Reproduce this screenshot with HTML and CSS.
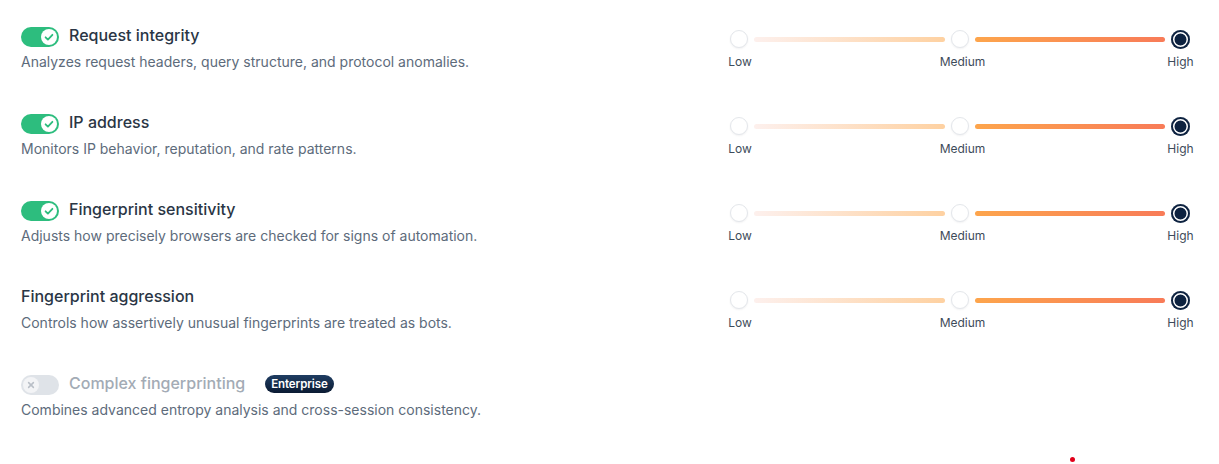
FILE: index.html
```html
<!DOCTYPE html>
<html>
<head>
<meta charset="utf-8">
<link rel="stylesheet" href="styles.css">
</head>
<body>
<div class="list">
  <div class="row">
    <div class="info">
      <div class="head">
        <span class="toggle on"><span class="knob"><svg viewBox="0 0 16 16" width="16" height="16"><path d="M4.6 8.3l2.3 2.3 4.5-4.8" fill="none" stroke="#2dbd7e" stroke-width="1.8" stroke-linecap="round" stroke-linejoin="round"/></svg></span></span>
        <span class="title">Request integrity</span>
      </div>
      <div class="desc">Analyzes request headers, query structure, and protocol anomalies.</div>
    </div>
    <div class="slider">
      <span class="stop"></span><span class="track t1"></span><span class="stop"></span><span class="track t2"></span><span class="stop active"></span>
      <span class="lab l1">Low</span><span class="lab l2">Medium</span><span class="lab l3">High</span>
    </div>
  </div>
  <div class="row">
    <div class="info">
      <div class="head">
        <span class="toggle on"><span class="knob"><svg viewBox="0 0 16 16" width="16" height="16"><path d="M4.6 8.3l2.3 2.3 4.5-4.8" fill="none" stroke="#2dbd7e" stroke-width="1.8" stroke-linecap="round" stroke-linejoin="round"/></svg></span></span>
        <span class="title">IP address</span>
      </div>
      <div class="desc">Monitors IP behavior, reputation, and rate patterns.</div>
    </div>
    <div class="slider">
      <span class="stop"></span><span class="track t1"></span><span class="stop"></span><span class="track t2"></span><span class="stop active"></span>
      <span class="lab l1">Low</span><span class="lab l2">Medium</span><span class="lab l3">High</span>
    </div>
  </div>
  <div class="row">
    <div class="info">
      <div class="head">
        <span class="toggle on"><span class="knob"><svg viewBox="0 0 16 16" width="16" height="16"><path d="M4.6 8.3l2.3 2.3 4.5-4.8" fill="none" stroke="#2dbd7e" stroke-width="1.8" stroke-linecap="round" stroke-linejoin="round"/></svg></span></span>
        <span class="title">Fingerprint sensitivity</span>
      </div>
      <div class="desc">Adjusts how precisely browsers are checked for signs of automation.</div>
    </div>
    <div class="slider">
      <span class="stop"></span><span class="track t1"></span><span class="stop"></span><span class="track t2"></span><span class="stop active"></span>
      <span class="lab l1">Low</span><span class="lab l2">Medium</span><span class="lab l3">High</span>
    </div>
  </div>
  <div class="row">
    <div class="info">
      <div class="head">
        <span class="title">Fingerprint aggression</span>
      </div>
      <div class="desc">Controls how assertively unusual fingerprints are treated as bots.</div>
    </div>
    <div class="slider">
      <span class="stop"></span><span class="track t1"></span><span class="stop"></span><span class="track t2"></span><span class="stop active"></span>
      <span class="lab l1">Low</span><span class="lab l2">Medium</span><span class="lab l3">High</span>
    </div>
  </div>
  <div class="row">
    <div class="info">
      <div class="head">
        <span class="toggle off"><span class="knob"><svg viewBox="0 0 16 16" width="16" height="16"><path d="M5.6 5.6l4.8 4.8M10.4 5.6l-4.8 4.8" fill="none" stroke="#b9bfc7" stroke-width="1.5" stroke-linecap="round"/></svg></span></span>
        <span class="title disabled">Complex fingerprinting</span>
        <span class="badge">Enterprise</span>
      </div>
      <div class="desc">Combines advanced entropy analysis and cross-session consistency.</div>
    </div>
  </div>
</div>
<span class="dot"></span>
</body>
</html>
```
FILE: styles.css
```css
html, body {
  margin: 0;
  padding: 0;
  background: #ffffff;
  font-family: Inter, "Noto Sans", sans-serif;
}
body {
  position: relative;
  width: 1219px;
  height: 464px;
  overflow: hidden;
}
.list {
  padding: 24px 30px 0 21px;
  display: flex;
  flex-direction: column;
  gap: 39px;
}
.row {
  display: flex;
  justify-content: space-between;
  align-items: flex-start;
}
.head {
  display: flex;
  align-items: center;
  height: 22px;
}
.toggle {
  width: 38px;
  height: 20px;
  border-radius: 10px;
  display: flex;
  align-items: center;
  box-sizing: border-box;
  padding: 0 2px;
  margin-right: 10px;
  margin-top: 3px;
}
.toggle.on {
  background: #2dbd7e;
  justify-content: flex-end;
}
.toggle.off {
  background: #dfe3e8;
  justify-content: flex-start;
}
.knob {
  width: 16px;
  height: 16px;
  border-radius: 50%;
  background: #ffffff;
  display: flex;
}
.toggle.off .knob {
  background: #f3f4f6;
}
.title {
  font-size: 16px;
  font-weight: 500;
  color: #2a3645;
  line-height: 22px;
}
.title.disabled {
  color: #a3abb5;
}
.badge {
  margin-left: 20px;
  background: linear-gradient(#1f3d62, #0b1b33);
  color: #ffffff;
  font-size: 11.5px;
  font-weight: 600;
  line-height: 18px;
  padding: 0 6px;
  border-radius: 9px;
  margin-top: 1px;
  letter-spacing: -0.1px;
}
.desc {
  margin-top: 6px;
  font-size: 14px;
  line-height: 20px;
  color: #5d6b7b;
}
.slider {
  width: 459px;
  display: grid;
  grid-template-columns: 18px 1fr 18px 1fr 18px;
  grid-template-rows: 18px 16px;
  row-gap: 6px;
  padding-top: 6px;
  align-items: center;
}
.stop {
  width: 18px;
  height: 18px;
  border-radius: 50%;
  box-sizing: border-box;
  background: #ffffff;
  border: 1.5px solid #e4e7eb;
  box-shadow: 0 1px 2px rgba(15, 23, 42, 0.06);
}
.stop.active {
  width: 19px;
  height: 19px;
  border: none;
  background: #0d2240;
  box-shadow: inset 0 0 0 2px #0d2240, inset 0 0 0 3.5px #ffffff;
}
.track {
  height: 5px;
  border-radius: 3px;
  margin: 0 6px;
}
.t1 {
  background: linear-gradient(90deg, #fdf0ed, #fed1a1);
}
.t2 {
  background: linear-gradient(90deg, #fda54c, #f87b58);
}
.lab {
  font-size: 12px;
  line-height: 16px;
  color: #3e4b5a;
  justify-self: center;
  white-space: nowrap;
  grid-row: 2;
}
.l1 { grid-column: 1; margin-left: 2px; }
.l2 { grid-column: 3; margin-left: 6px; }
.l3 { grid-column: 5; margin-left: 1px; }
.dot {
  position: absolute;
  left: 1070px;
  top: 457px;
  width: 5px;
  height: 5px;
  border-radius: 50%;
  background: #e1001a;
}
```
